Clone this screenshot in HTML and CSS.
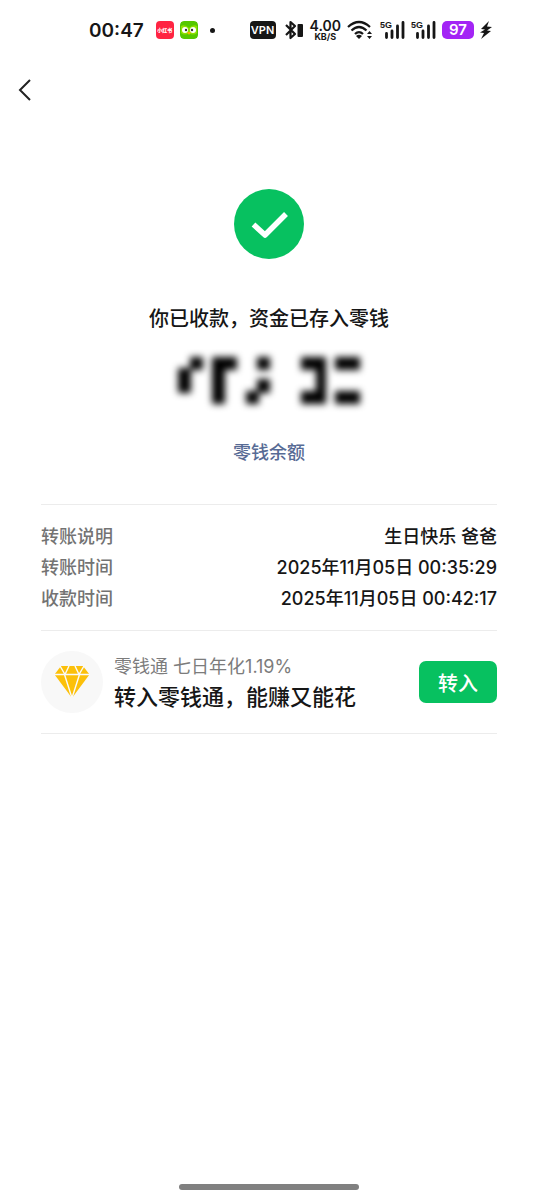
FILE: index.html
```html
<!DOCTYPE html>
<html lang="zh-CN">
<head>
<meta charset="utf-8">
<meta name="viewport" content="width=device-width, initial-scale=1">
<title>零钱</title>
<link rel="stylesheet" href="styles.css">
</head>
<body>
<div class="screen">
  <div class="status">
    <div class="status-left">
      <span class="clock">00:47</span>
      <span class="app-icon app-red">小红书</span>
      <svg class="app-icon" viewBox="0 0 18 18" aria-hidden="true">
        <rect width="18" height="18" rx="4" fill="#55c800"/>
        <path d="M1 5q4-2 8 2q4-4 8-2v7q-4 3-8 0q-4 3-8 0z" fill="#8ee000"/>
        <circle cx="5" cy="9" r="3" fill="#fff"/><circle cx="13" cy="9" r="3" fill="#fff"/>
        <circle cx="6" cy="9" r="1.2" fill="#333"/><circle cx="12" cy="9" r="1.2" fill="#333"/>
        <path d="M7 11h4l-2 3z" fill="#ffb100"/>
      </svg>
      <span class="dot"></span>
    </div>
    <div class="status-right">
      <span class="vpn">VPN</span>
      <svg width="22" height="20" viewBox="0 0 22 20" aria-hidden="true">
        <path d="M4 5l9 9-4.500 4V2L13 6l-9 9" fill="none" stroke="#161616" stroke-width="2.200" stroke-linejoin="round"/>
        <rect x="15.500" y="4" width="5.500" height="13" rx="1" fill="#161616"/>
      </svg>
      <span class="speed"><b>4.00</b><small>KB/S</small></span>
      <svg width="27" height="20" viewBox="0 0 27 20" aria-hidden="true">
        <g fill="none" stroke="#161616" stroke-width="2.2">
          <path d="M1 7Q12-3 23 7"/><path d="M4.500 10.500Q12 3.500 19.500 10.500"/><path d="M8 14Q12 10 16 14"/>
        </g>
        <path d="M9 16q3-2.500 6 0l-3 3z" fill="#161616"/>
        <path d="M20 14l2.500-3 2.500 3zM20 16l2.500 3 2.500-3z" fill="#161616"/>
      </svg>
      <span class="signal"><i>5G</i>
        <svg width="25" height="20" viewBox="0 0 25 20" aria-hidden="true"><path d="M6.500 17.500V13.500M12 17.500V11M17.500 17.500V6M23 17.500V2.500" stroke="#161616" stroke-width="2.800" stroke-linecap="round"/></svg>
      </span>
      <span class="signal"><i>5G</i>
        <svg width="25" height="20" viewBox="0 0 25 20" aria-hidden="true"><path d="M6.500 17.500V13.500M12 17.500V11M17.500 17.500V6M23 17.500V2.500" stroke="#161616" stroke-width="2.800" stroke-linecap="round"/></svg>
      </span>
      <span class="battery">97</span>
      <svg width="12" height="18" viewBox="0 0 12 18" aria-hidden="true"><path d="M9 0L1 8l4 .5L0 11.500l4 .5-3 6 10-8-4-.5 5-3.500-5-.5z" fill="#161616"/></svg>
    </div>
  </div>

  <header class="nav">
    <button class="back" type="button" aria-label="返回">
      <svg width="14" height="22" viewBox="0 0 14 22" aria-hidden="true"><path d="M12 1L2 11l10 10" fill="none" stroke="#222" stroke-width="2"/></svg>
    </button>
  </header>

  <main class="content">
    <section class="result">
      <svg class="success" viewBox="0 0 70 70" aria-hidden="true">
        <circle cx="35" cy="35" r="35" fill="#07c160"/>
        <path d="M19.500 35.500L31 46 52 25" fill="none" stroke="#fff" stroke-width="5.500" stroke-linejoin="round"/>
      </svg>
      <h1 class="title">你已收款，资金已存入零钱</h1>
      <svg class="amount" width="204" height="64" viewBox="0 0 204 64" aria-hidden="true">
        <defs><filter id="soft" x="-10%" y="-20%" width="120%" height="140%"><feGaussianBlur stdDeviation="3.500"/></filter></defs>
        <g fill="#000" filter="url(#soft)">
          <path d="M23 8h13v13H23zM11 19h13v25H11z"/>
          <path d="M45 8h25v13H58v34H45z"/>
          <path d="M90 8h13v13H90zM90 30h13v14H90zM79 42h13v13H79z"/>
          <path d="M134 8h25v47h-25V42h15V21h-15z"/>
          <path d="M168 8h25v13h-25zM168 42h25v13h-25z"/>
        </g>
      </svg>
      <a class="balance" href="#">零钱余额</a>
    </section>

    <dl class="details">
      <div class="row"><dt>转账说明</dt><dd>生日快乐 爸爸</dd></div>
      <div class="row"><dt>转账时间</dt><dd>2025年11月05日 00:35:29</dd></div>
      <div class="row"><dt>收款时间</dt><dd>2025年11月05日 00:42:17</dd></div>
    </dl>

    <section class="promo">
      <span class="gem">
        <svg width="36" height="32" viewBox="0 0 36 32" aria-hidden="true">
          <path d="M7 0h22l6.500 8.500L18 32 .500 8.500z" fill="#fcc00a"/>
          <path d="M0 8.500h36M10.500 8.500L18 32l7.500-23.500M6 0l5 8.500L15 0M30 0l-5 8.500L21 0" fill="none" stroke="#fafafa" stroke-width="1.400"/>
        </svg>
      </span>
      <div class="promo-text">
        <p class="rate">零钱通 七日年化1.19%</p>
        <p class="slogan">转入零钱通，能赚又能花</p>
      </div>
      <button class="transfer" type="button">转入</button>
    </section>
  </main>
  <div class="home-bar"></div>
</div>
</body>
</html>
```
FILE: styles.css
```css
* { box-sizing: border-box; }
body {
  margin: 0;
  background: #fff;
  color: #161616;
  font-family: Inter, "Noto Sans CJK SC", sans-serif;
}
h1, p, dl, dd { margin: 0; }
button { border: 0; padding: 0; font: inherit; cursor: pointer; }
svg { display: block; flex: none; }

.screen { min-height: 100vh; display: flex; flex-direction: column; }

.status {
  height: 60px;
  padding: 0 46px 0 89px;
  display: flex;
  align-items: center;
  justify-content: space-between;
}
.status-left { display: flex; align-items: center; gap: 6px; }
.clock { font-size: 19px; font-weight: 600; margin-right: 6px; }
.app-icon { width: 18px; height: 18px; border-radius: 4px; }
.app-red {
  background: #ff2442;
  color: #fff;
  font-size: 5px;
  font-weight: 900;
  line-height: 18px;
  text-align: center;
}
.dot { width: 5px; height: 5px; margin-left: 6px; border-radius: 50%; background: #161616; }
.status-right { display: flex; align-items: center; gap: 6px; }
.vpn {
  width: 26px;
  border-radius: 4px;
  background: #161616;
  color: #fff;
  font-size: 11px;
  font-weight: 600;
  line-height: 18px;
  text-align: center;
}
.speed { display: flex; flex-direction: column; align-items: center; }
.speed b { font-size: 14px; line-height: 13px; font-weight: 600; }
.speed small { font-size: 9px; line-height: 9px; font-weight: 700; }
.signal { position: relative; }
.signal i {
  position: absolute;
  left: 0;
  top: 0;
  font: 700 9px/10px "Liberation Sans", sans-serif;
}
.battery {
  width: 32px;
  border-radius: 5px;
  background: #a324f5;
  color: #fff;
  font-size: 15px;
  font-weight: 600;
  line-height: 18px;
  text-align: center;
}

.nav { height: 60px; padding: 0 11px; display: flex; align-items: center; }
.back { width: 28px; height: 44px; display: grid; place-items: center; background: none; }

.content { flex: 1; padding: 69px 41px 0; }
.result { display: flex; flex-direction: column; align-items: center; padding-bottom: 37px; }
.success { width: 70px; height: 70px; }
.title { margin-top: 45px; font-size: 20px; line-height: 30px; font-weight: 500; }
.amount { margin-top: 15px; }
.balance { margin-top: 26px; color: #576b95; font-size: 18px; line-height: 28px; font-weight: 500; text-decoration: none; }

.details { padding: 16px 0; border-top: 1px solid #ececec; border-bottom: 1px solid #ececec; }
.row { display: flex; justify-content: space-between; font-size: 18px; line-height: 31px; font-weight: 500; }
dt { color: #737373; }

.promo { display: flex; align-items: center; gap: 11px; padding: 20px 0; border-bottom: 1px solid #ececec; }
.gem { width: 62px; height: 62px; border-radius: 50%; background: #f8f8f8; display: grid; place-items: center; flex: none; }
.promo-text { flex: 1; padding-top: 2px; }
.rate { color: #7c7c7c; font-size: 18px; line-height: 28px; }
.slogan { font-size: 22px; line-height: 32px; font-weight: 500; }
.transfer {
  width: 78px;
  height: 42px;
  border-radius: 7px;
  background: #07c160;
  color: #fff;
  font-size: 20px;
  font-weight: 500;
}
.home-bar { width: 180px; height: 6px; margin: 0 auto 10px; border-radius: 3px; background: #808080; }
```
